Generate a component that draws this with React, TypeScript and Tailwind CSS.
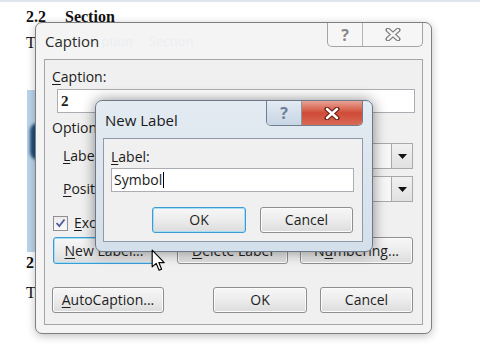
import React from 'react';

const ui = "font-['Open_Sans','Noto_Sans',sans-serif]";

function Btn({
  children,
  className = '',
  focus = false,
}: {
  children?: React.ReactNode;
  className?: string;
  focus?: boolean;
}) {
  return (
    <div
      className={`flex items-center justify-center rounded-[3px] border bg-linear-to-b from-[#f7f7f7] via-[#ececec] to-[#dcdcdc] text-[14px] text-[#1e1e1e] ${
        focus
          ? 'border-[#3c9bd3] shadow-[inset_0_0_0_1px_#a6def5]'
          : 'border-[#8f8f8f] shadow-[inset_0_0_0_1px_#fbfbfb]'
      } ${className}`}
    >
      {children}
    </div>
  );
}

function U({ children }: { children: React.ReactNode }) {
  return <span className="underline underline-offset-2">{children}</span>;
}

function CloseGlyph({ stroke, fill }: { stroke: string; fill: string }) {
  return (
    <svg width="16" height="13" viewBox="0 0 16 13">
      <path d="M3 2 L13 11 M13 2 L3 11" stroke={stroke} strokeWidth="5" strokeLinecap="round" />
      <path d="M3 2 L13 11 M13 2 L3 11" stroke={fill} strokeWidth="2.4" strokeLinecap="round" />
    </svg>
  );
}

function Combo({ className = '' }: { className?: string }) {
  return (
    <div className={`flex h-[26px] justify-end border border-[#a9a9a9] bg-[#f7f7f7] ${className}`}>
      <div className="flex w-[21px] items-center justify-center border-l border-[#a9a9a9] bg-linear-to-b from-[#f1f1f1] to-[#e1e1e1]">
        <svg width="9" height="5" viewBox="0 0 9 5">
          <path d="M0 0 L9 0 L4.5 5 Z" fill="#111" />
        </svg>
      </div>
    </div>
  );
}

function CaptionDialog() {
  return (
    <div className={`absolute left-[35px] top-[22px] flex h-[312px] w-[397px] flex-col rounded-[7px] border border-[#7f7f7f] bg-[#f4f4f4] shadow-[0_2px_8px_rgba(0,0,0,0.25)] ${ui}`}>
      <div className="flex h-[36px] items-start justify-between">
        <div className="flex pl-[9px] pt-[8px] text-[15px] leading-[20px]">
          <span className="text-[#2a2a2a]">Caption</span>
          <span className="ml-[2px] text-[13px] text-[#eceef1]">ption</span>
          <span className="ml-[16px] text-[13px] text-[#eceef1]">Section</span>
        </div>
        <div className="mr-[8px] flex h-[24px] rounded-b-[5px] border border-t-0 border-[#a3a3a3] bg-[#f6f6f6]">
          <div className="flex w-[35px] items-center justify-center border-r border-[#b5b5b5] text-[16px] font-bold text-[#8a8a8a]">
            ?
          </div>
          <div className="flex w-[59px] items-center justify-center">
            <CloseGlyph stroke="#7c7c7c" fill="#f4f4f4" />
          </div>
        </div>
      </div>

      <div className="mx-[8px] mb-[8px] flex flex-1 flex-col border border-[#a5a5a5] bg-[#f0f0f0] text-[14px] leading-[18px] text-[#1a1a1a]">
        <div className="ml-[7px] mt-[8px]">
          <U>C</U>aption:
        </div>
        <div className="ml-[12px] mt-[3px] flex h-[24px] w-[358px] items-center border border-[#abadb3] bg-white pl-[3px] font-['Liberation_Serif',serif] text-[15px] font-bold">
          2
        </div>
        <div className="ml-[7px] mt-[6px]">Options</div>
        <div className="mt-[6px] flex h-[26px] items-center">
          <div className="ml-[18px]">
            <U>L</U>abel:
          </div>
          <Combo className="ml-auto mr-[9px] w-[273px]" />
        </div>
        <div className="mt-[7px] flex h-[26px] items-center">
          <div className="ml-[18px]">
            <U>P</U>osition:
          </div>
          <Combo className="ml-auto mr-[9px] w-[273px]" />
        </div>
        <div className="mt-[13px] flex h-[16px] items-center">
          <div className="ml-[8px] flex h-[15px] w-[15px] items-center justify-center border border-[#8f8f8f] bg-linear-to-b from-[#ececec] to-[#fafafa]">
            <svg width="11" height="10" viewBox="0 0 11 10">
              <path d="M1.5 5 L4.3 8 L9.5 1.5" stroke="#4b5fa0" strokeWidth="1.8" fill="none" />
            </svg>
          </div>
          <div className="ml-[6px]">
            <U>E</U>xclude label from caption
          </div>
        </div>
        <div className="mt-[6px] flex">
          <Btn focus className="ml-[8px] h-[27px] w-[102px]">
            <span>
              <U>N</U>ew Label...
            </span>
          </Btn>
          <Btn className="ml-[22px] h-[27px] w-[111px]">
            <span>
              <U>D</U>elete Label
            </span>
          </Btn>
          <Btn className="ml-[12px] h-[27px] w-[113px]">
            <span>
              N<U>u</U>mbering...
            </span>
          </Btn>
        </div>
        <div className="mt-[23px] flex">
          <Btn className="ml-[7px] h-[26px] w-[112px]">
            <span>
              <U>A</U>utoCaption...
            </span>
          </Btn>
          <Btn className="ml-[49px] h-[26px] w-[94px]">OK</Btn>
          <Btn className="ml-[13px] h-[26px] w-[93px]">Cancel</Btn>
        </div>
      </div>
    </div>
  );
}

function NewLabelDialog() {
  return (
    <div className={`absolute left-[95px] top-[100px] flex h-[152px] w-[278px] flex-col rounded-[7px] border border-[#6c7988] bg-linear-to-b from-[#e4ebf2] to-[#d3dfea] shadow-[0_0_14px_rgba(0,0,0,0.45)] ${ui}`}>
      <div className="flex h-[37px] items-start justify-between">
        <div className="pl-[9px] pt-[9px] text-[15px] leading-[20px] text-[#1a1a1a]">New Label</div>
        <div className="mr-[9px] flex h-[25px] overflow-hidden rounded-b-[5px] border border-t-0 border-[#6f7d8c]">
          <div className="flex w-[35px] items-center justify-center border-r border-[#8a97a6] bg-linear-to-b from-[#e3ebf3] to-[#c7d5e4] text-[16px] font-bold text-[#6d7f95]">
            ?
          </div>
          <div className="flex w-[60px] items-center justify-center bg-linear-to-b from-[#e7a294] via-[#cf4a36] to-[#d86a55]">
            <CloseGlyph stroke="#6e2418" fill="#ffffff" />
          </div>
        </div>
      </div>
      <div className="mb-[9px] ml-[7px] mr-[9px] flex flex-1 flex-col border border-[#8e9aa8] bg-[#f0f0f0] text-[14px] leading-[18px] text-[#1a1a1a]">
        <div className="ml-[7px] mt-[9px]">
          <U>L</U>abel:
        </div>
        <div className="ml-[7px] mt-[2px] flex h-[24px] w-[243px] items-center border border-[#abadb3] bg-white pl-[2px]">
          <span>Symbol</span>
          <span className="ml-[1px] h-[16px] w-[1px] bg-black" />
        </div>
        <div className="mt-[15px] flex">
          <Btn focus className="ml-[48px] h-[26px] w-[94px]">OK</Btn>
          <Btn className="ml-[14px] h-[26px] w-[93px]">Cancel</Btn>
        </div>
      </div>
    </div>
  );
}

export default function App() {
  return (
    <div className="relative h-[360px] w-[480px] overflow-hidden bg-white">
      <div className="h-[2px] bg-[#dfe5ec]" />
      <div className="pl-[26px] pt-[5px] font-['Liberation_Serif',serif] text-[#111]">
        <div className="flex h-[19px] text-[16px] font-bold leading-[19px]">
          <span>2.2</span>
          <span className="ml-[19px]">Section</span>
        </div>
        <div className="mt-[8px] text-[16px] leading-[18px]">T</div>
        <div className="ml-[1px] mt-[38px] h-[162px] w-[16px] bg-[#bad4ea] pl-[3px] pt-[33px]">
          <div className="h-[37px] w-[8px] rounded-l-full bg-[#1f4d77] blur-[1.5px]" />
        </div>
        <div className="mt-[2px] text-[16px] font-bold leading-[18px]">2</div>
        <div className="mt-[12px] text-[16px] leading-[18px]">T</div>
      </div>

      <CaptionDialog />
      <NewLabelDialog />

      <svg className="absolute left-[151px] top-[249px]" width="15" height="23" viewBox="0 0 13 20">
        <path d="M1 1 L1 15.5 L4.5 12.5 L7 18.5 L9.2 17.6 L6.8 11.8 L11.5 11.8 Z" fill="#fff" stroke="#000" strokeWidth="1" strokeLinejoin="round" />
      </svg>
    </div>
  );
}
